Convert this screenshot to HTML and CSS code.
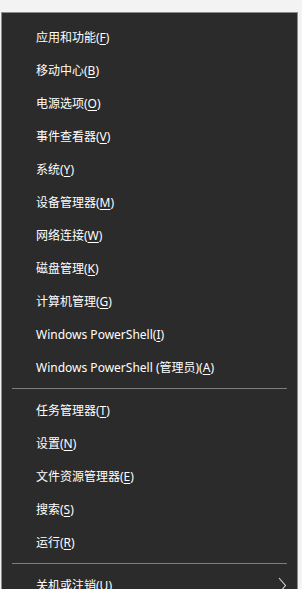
FILE: index.html
```html
<!DOCTYPE html>
<html lang="zh-CN">

<head>
    <meta charset="utf-8">
    <meta name="viewport" content="width=device-width, initial-scale=1.0">
    <title>Win+X</title>
    <link rel="stylesheet" href="styles.css">
</head>

<body>
    <nav class="menu">
        <div class="item">应用和功能(<u>F</u>)</div>
        <div class="item">移动中心(<u>B</u>)</div>
        <div class="item">电源选项(<u>O</u>)</div>
        <div class="item">事件查看器(<u>V</u>)</div>
        <div class="item">系统(<u>Y</u>)</div>
        <div class="item">设备管理器(<u>M</u>)</div>
        <div class="item">网络连接(<u>W</u>)</div>
        <div class="item">磁盘管理(<u>K</u>)</div>
        <div class="item">计算机管理(<u>G</u>)</div>
        <div class="item">Windows PowerShell(<u>I</u>)</div>
        <div class="item">Windows PowerShell (管理员)(<u>A</u>)</div>
        <div class="sep"></div>
        <div class="item">任务管理器(<u>T</u>)</div>
        <div class="item">设置(<u>N</u>)</div>
        <div class="item">文件资源管理器(<u>E</u>)</div>
        <div class="item">搜索(<u>S</u>)</div>
        <div class="item">运行(<u>R</u>)</div>
        <div class="sep"></div>
        <div class="item sub">关机或注销(<u>U</u>)
            <svg class="arrow" width="9" height="17" viewBox="0 0 9 17">
                <path d="M1 1 L7.5 8.5 L1 16" fill="none" stroke="#d8d8d8" stroke-width="1.1"/>
            </svg>
        </div>
    </nav>
</body>

</html>
```

FILE: styles.css
```css
body {
    margin: 0;
    padding: 12px 0 0 1px;
    background: #f3f3f3;
    font-family: "Noto Sans", "Noto Sans CJK SC", sans-serif;
    font-size: 12px;
    overflow: hidden;
}

.menu {
    width: 295px;
    height: 600px;
    padding-top: 8px;
    background: #2b2b2b;
    border: 1px solid #8c8c8c;
    border-bottom: none;
}

.item {
    position: relative;
    height: 33px;
    line-height: 33px;
    padding-left: 34px;
    color: #ffffff;
    white-space: nowrap;
}

.item u {
    text-underline-offset: 2px;
}

.sep {
    height: 1px;
    margin: 4px 10px 5px 10px;
    background: #7d7d7d;
}

.arrow {
    position: absolute;
    right: 10px;
    top: 8px;
}
```
